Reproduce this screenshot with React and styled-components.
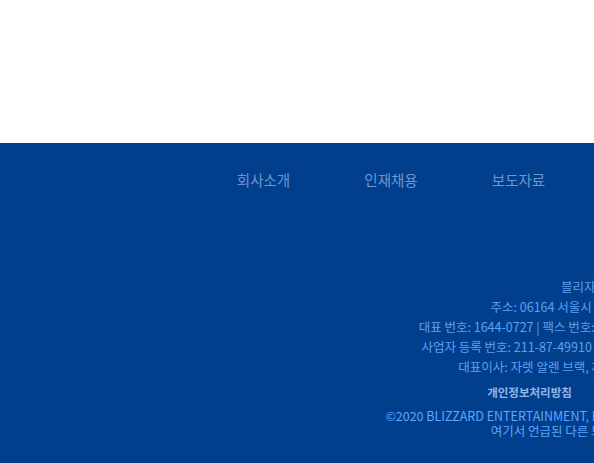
import React from 'react';
import styled, { createGlobalStyle } from 'styled-components';

const GlobalStyle = createGlobalStyle`
  html, body {
    margin: 0;
    padding: 0;
    background: #ffffff;
  }
  body {
    min-width: 1292px;
    font-family: "Noto Sans CJK KR", "Noto Sans", sans-serif;
  }
`;

const navLinks = ['회사소개', '인재채용', '보도자료', '고객지원', '연락처', '이용약관', '사이트맵'];

const infoLines = [
    '블리자드 엔터테인먼트 유한회사.',
    '주소: 06164 서울시 강남구 테헤란로 521 파르나스타워 29층',
    '대표 번호: 1644-0727 | 팩스 번호: 02-3454-1699 | 이메일: kr-support@blizzard.com',
    '사업자 등록 번호: 211-87-49910 | 통신판매업 신고번호: 제 2020-서울강남-01234호 외',
    '대표이사: 자렛 알렌 브랙, 제이슨 로버트 스미스 | 호스팅 서비스: 블리자드',
];

const legalLinks = ['개인정보처리방침', '이용약관', '법적 고지', '청소년 보호정책'];

const App = () => {
    return <Page>
        <GlobalStyle />
        <Top />
        <Footer>
            <Nav>
                {navLinks.map((label) => <NavLink key={label}>{label}</NavLink>)}
            </Nav>
            <Info>
                {infoLines.map((line) => <InfoLine key={line}>{line}</InfoLine>)}
            </Info>
            <Legal>
                {legalLinks.map((label) => <LegalLink key={label}>{label}</LegalLink>)}
            </Legal>
            <Copyright>
                <div>©2020 BLIZZARD ENTERTAINMENT, INC. ALL RIGHTS RESERVED. 모든 권리 보유하고 있습니다.</div>
                <div>여기서 언급된 다른 모든 상표는 해당 소유자들의 자산입니다.</div>
            </Copyright>
        </Footer>
    </Page>;
};

const Page = styled.div`
  width: 100%;
`;

const Top = styled.div`
  height: 143px;
  background: #ffffff;
`;

const Footer = styled.footer`
  background: #013f8c;
  min-height: 320px;
  padding: 27px 0 24px;
  display: flex;
  flex-direction: column;
  align-items: center;
`;

const Nav = styled.nav`
  display: flex;
  justify-content: center;
`;

const NavLink = styled.a`
  width: 127.5px;
  text-align: center;
  font-size: 14.5px;
  line-height: 20px;
  color: #6d96d2;
  cursor: pointer;
`;

const Info = styled.div`
  margin-top: 87px;
  display: flex;
  flex-direction: column;
  align-items: center;
`;

const InfoLine = styled.div`
  font-size: 12.5px;
  line-height: 20px;
  color: #5f9ff0;
  white-space: nowrap;
`;

const Legal = styled.div`
  margin-top: 5px;
  display: flex;
  justify-content: center;
  gap: 23px;
`;

const LegalLink = styled.a`
  font-size: 11.5px;
  font-weight: 700;
  line-height: 20px;
  color: #8fb5ea;
  white-space: nowrap;
`;

const Copyright = styled.div`
  margin-top: 6px;
  text-align: center;
  font-size: 12.5px;
  line-height: 15px;
  color: #5ea6ff;
  white-space: nowrap;
`;

export default App;
